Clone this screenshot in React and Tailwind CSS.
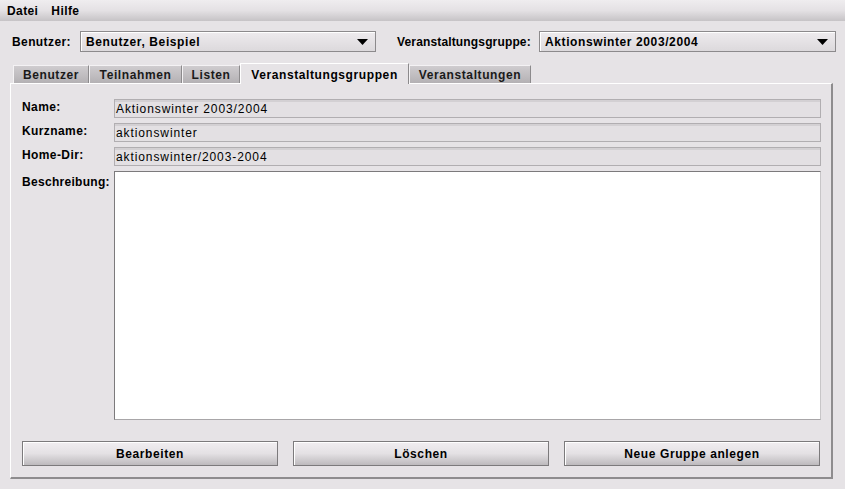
import React from "react";

const FONT = { fontFamily: '"Liberation Sans", Arial, sans-serif' };

const tabs = [
  { label: "Benutzer", w: "w-[76px]" },
  { label: "Teilnahmen", w: "w-[93px]" },
  { label: "Listen", w: "w-[58px]" },
  { label: "Veranstaltungsgruppen", w: "w-[169px]", active: true },
  { label: "Veranstaltungen", w: "w-[122px]" },
];

const fields = [
  { label: "Name:", value: "Aktionswinter 2003/2004" },
  { label: "Kurzname:", value: "aktionswinter" },
  { label: "Home-Dir:", value: "aktionswinter/2003-2004" },
];

/* ------------ Combo box ------------ */
const Combo = ({ value, width }) => (
  <div
    className={`${width} h-[21px] flex items-center border border-[#8c8a8c] shadow-[inset_1px_1px_0_#ffffff] bg-gradient-to-b from-[#eeebee] to-[#dcd9dc]`}
  >
    <span className="flex-1 pl-[5px] text-[12px] font-bold tracking-[0.6px] text-black">
      {value}
    </span>
    <svg width="11" height="6" viewBox="0 0 11 6" className="mr-[7px]">
      <polygon points="0,0 11,0 5.5,6" fill="#000" />
    </svg>
  </div>
);

/* ------------ Button ------------ */
const Button = ({ children }) => (
  <div className="w-[256px] h-[25px] border border-[#7c7a7c] shadow-[inset_1px_1px_0_#ffffff] bg-gradient-to-b from-[#f1eef1] via-[#e4e1e4] to-[#bdbabd] flex items-center justify-center text-[12px] font-bold tracking-[0.6px] text-black">
    {children}
  </div>
);

export default function App() {
  return (
    <div
      className="w-[845px] h-[489px] bg-[#e6e3e6] text-black overflow-hidden"
      style={FONT}
    >
      {/* Menu */}
      <div className="h-[21px] flex items-center gap-[13px] pl-[7px] bg-gradient-to-b from-[#efedef] via-[#e4e1e4] to-[#c6c3c6] text-[12px] font-bold tracking-[0.4px]">
        <span>Datei</span>
        <span>Hilfe</span>
      </div>

      {/* Top selection row */}
      <div className="mt-[10px] h-[21px] flex items-center pl-[12px]">
        <span className="text-[12px] font-bold tracking-[0.4px] w-[68px]">
          Benutzer:
        </span>
        <Combo value="Benutzer, Beispiel" width="w-[296px]" />
        <span className="ml-[21px] w-[142px] text-[12px] font-bold tracking-[0.15px]">
          Veranstaltungsgruppe:
        </span>
        <Combo value="Aktionswinter 2003/2004" width="w-[297px]" />
      </div>

      {/* Tabs */}
      <div className="mt-[10px] ml-[13px] h-[21px] flex items-end">
        {tabs.map((t) =>
          t.active ? (
            <div
              key={t.label}
              className={`${t.w} h-[21px] bg-[#e6e3e6] border-t border-l border-white border-r border-r-[#8c8a8c] -mb-px relative z-10 flex items-start pt-[2px] justify-center text-[12px] font-bold tracking-[0.6px]`}
            >
              {t.label}
            </div>
          ) : (
            <div
              key={t.label}
              className={`${t.w} h-[18px] border-t border-l border-[#f4f2f4] border-r border-r-[#8c8a8c] bg-gradient-to-b from-[#cfcccf] to-[#b4b1b4] flex items-center justify-center text-[12px] font-bold tracking-[0.6px] text-[#1a1a1a]`}
            >
              {t.label}
            </div>
          )
        )}
      </div>

      {/* Panel */}
      <div className="ml-[10px] w-[823px] h-[396px] border-t border-l border-white border-r-2 border-b-2 border-r-[#8e8c8e] border-b-[#8e8c8e] pl-[11px] pr-[10px] pt-[15px] flex flex-col">
        <div className="flex flex-col gap-[5px]">
          {fields.map((f) => (
            <div key={f.label} className="flex items-center h-[19px]">
              <span className="w-[92px] text-[12px] font-bold tracking-[0.4px] -mt-[4px]">
                {f.label}
              </span>
              <div className="flex-1 h-[19px] border border-[#b1aeb1] bg-[#e3e0e3] shadow-[inset_0_2px_0_#d3d0d3] flex items-center pl-[1px] text-[12px] tracking-[0.9px]">
                {f.value}
              </div>
            </div>
          ))}
          <div className="flex h-[249px]">
            <span className="w-[92px] text-[12px] font-bold tracking-[0.3px] pt-[2px]">
              Beschreibung:
            </span>
            <div className="flex-1 bg-white border-t border-l border-[#7c7a7c] border-r border-b border-r-[#c8c6c8] border-b-[#a8a6a8]" />
          </div>
        </div>

        <div className="mt-[21px] flex gap-[15px]">
          <Button>Bearbeiten</Button>
          <Button>Löschen</Button>
          <Button>Neue Gruppe anlegen</Button>
        </div>
      </div>
    </div>
  );
}
